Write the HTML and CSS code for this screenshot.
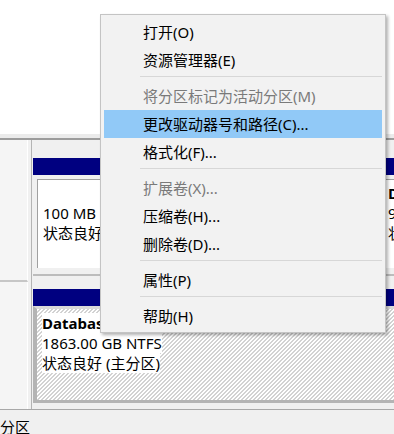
FILE: index.html
```html
<!DOCTYPE html>
<html lang="zh-CN">
<head>
    <meta charset="UTF-8">
    <meta name="viewport" content="width=device-width, initial-scale=1.0">
    <title>磁盘管理</title>
    <link rel="stylesheet" href="styles.css">
</head>
<body>

    <div class="list"></div>
    <div class="split"></div>

    <!-- disk 0 -->
    <div class="disk disk1">
        <div class="label"></div>
        <div class="parts">
            <div class="part p1">
                <div class="bar"></div>
                <div class="body">
                    <div class="inner">
                        <div class="name">&nbsp;</div>
                        <div>100 MB</div>
                        <div>状态良好 (EFI 系统分区)</div>
                    </div>
                </div>
            </div>
            <div class="part p2">
                <div class="bar"></div>
                <div class="body">
                    <div class="inner">
                        <div class="name">Data (D:)</div>
                        <div>931.51 GB NTFS</div>
                        <div>状态良好 (主分区)</div>
                    </div>
                </div>
            </div>
        </div>
    </div>

    <!-- disk 1 -->
    <div class="disk disk2">
        <div class="label"></div>
        <div class="parts">
            <div class="part p-full">
                <div class="bar"></div>
                <div class="body sel">
                    <div class="hatch">
                        <div><span class="name">Database (E:)</span></div>
                        <div><span>1863.00 GB NTFS</span></div>
                        <div><span>状态良好 (主分区)</span></div>
                    </div>
                </div>
            </div>
        </div>
    </div>

    <div class="legend">分区</div>

    <!-- context menu -->
    <div class="menu">
        <div class="item">打开(O)</div>
        <div class="item">资源管理器(E)</div>
        <div class="sep"></div>
        <div class="item off">将分区标记为活动分区(M)</div>
        <div class="item hover">更改驱动器号和路径(C)...</div>
        <div class="item">格式化(F)...</div>
        <div class="sep"></div>
        <div class="item off">扩展卷(X)...</div>
        <div class="item">压缩卷(H)...</div>
        <div class="item">删除卷(D)...</div>
        <div class="sep"></div>
        <div class="item">属性(P)</div>
        <div class="sep"></div>
        <div class="item">帮助(H)</div>
    </div>

</body>
</html>
```

FILE: styles.css
```css
* {
    box-sizing: border-box;
}
body {
    margin: 0;
    width: 394px;
    height: 434px;
    overflow: hidden;
    position: relative;
    background-color: #f0f0f0;
    font-family: "Noto Sans", "Noto Sans CJK SC", sans-serif;
    font-size: 15px;
    color: #000;
}
.list {
    height: 134px;
    background-color: #fff;
}
.split {
    height: 6px;
    background-color: #ebebeb;
    border-bottom: 2px solid #9c9c9c;
}

/* disk rows */
.disk {
    display: flex;
}
.disk1 {
    height: 142px;
}
.disk2 {
    height: 127px;
}
.label {
    width: 28px;
    background-color: #f5f5f5;
    border-right: 1px solid #fff;
}
.disk1 .label {
    border-bottom: 2px solid #c6c6c6;
}
.parts {
    flex: 1;
    display: flex;
    margin-left: 3px;
    padding-left: 1px;
    border-left: 1px solid #b4b4b4;
    overflow: hidden;
}
.disk1 .parts {
    padding-top: 18px;
    padding-bottom: 6px;
}
.disk2 .parts {
    padding-top: 7px;
    padding-bottom: 6px;
}
.part {
    display: flex;
    flex-direction: column;
    flex-shrink: 0;
}
.p1 {
    width: 345px;
}
.p2 {
    width: 220px;
}
.p-full {
    width: 420px;
}
.bar {
    height: 17px;
    background-color: #000080;
}
.body {
    flex: 1;
    padding: 4px 4px 6px;
    border-bottom: 2px solid #bcbcbc;
}
.inner {
    height: 100%;
    background-color: #fff;
    border-top: 1px solid #a0a0a0;
    border-left: 1px solid #a0a0a0;
    padding: 3px 0 0 5px;
    line-height: 20px;
    white-space: nowrap;
}
.name {
    font-weight: bold;
}
.body.sel {
    padding: 0;
    border-top: 3px solid #dadada;
    border-left: 4px solid #b4b4b4;
    border-bottom: 3px solid #b4b4b4;
}
.hatch {
    height: 100%;
    padding: 4px 0 0 5px;
    line-height: 20px;
    white-space: nowrap;
    background: repeating-linear-gradient(135deg, #fff 0 1.7px, #d2d2d2 1.7px 2.83px);
}
.hatch span {
    background-color: #fff;
}
.legend {
    border-top: 1px solid #a8a8a8;
    padding-top: 7px;
    line-height: 20px;
}

/* context menu */
.menu {
    position: absolute;
    left: 100px;
    top: 14px;
    width: 286px;
    padding: 3px 3px 2px;
    background-color: #f2f2f2;
    border: 1px solid #c4c4c4;
    box-shadow: 2px 2px 3px rgba(0, 0, 0, 0.3);
}
.item {
    height: 28px;
    line-height: 28px;
    padding-left: 39px;
    white-space: nowrap;
}
.item.off {
    color: #7a7a7a;
}
.item.hover {
    background-color: #91c9f7;
}
.sep {
    height: 1px;
    margin: 2px 0 5px 36px;
    background-color: #d7d7d7;
}
```
